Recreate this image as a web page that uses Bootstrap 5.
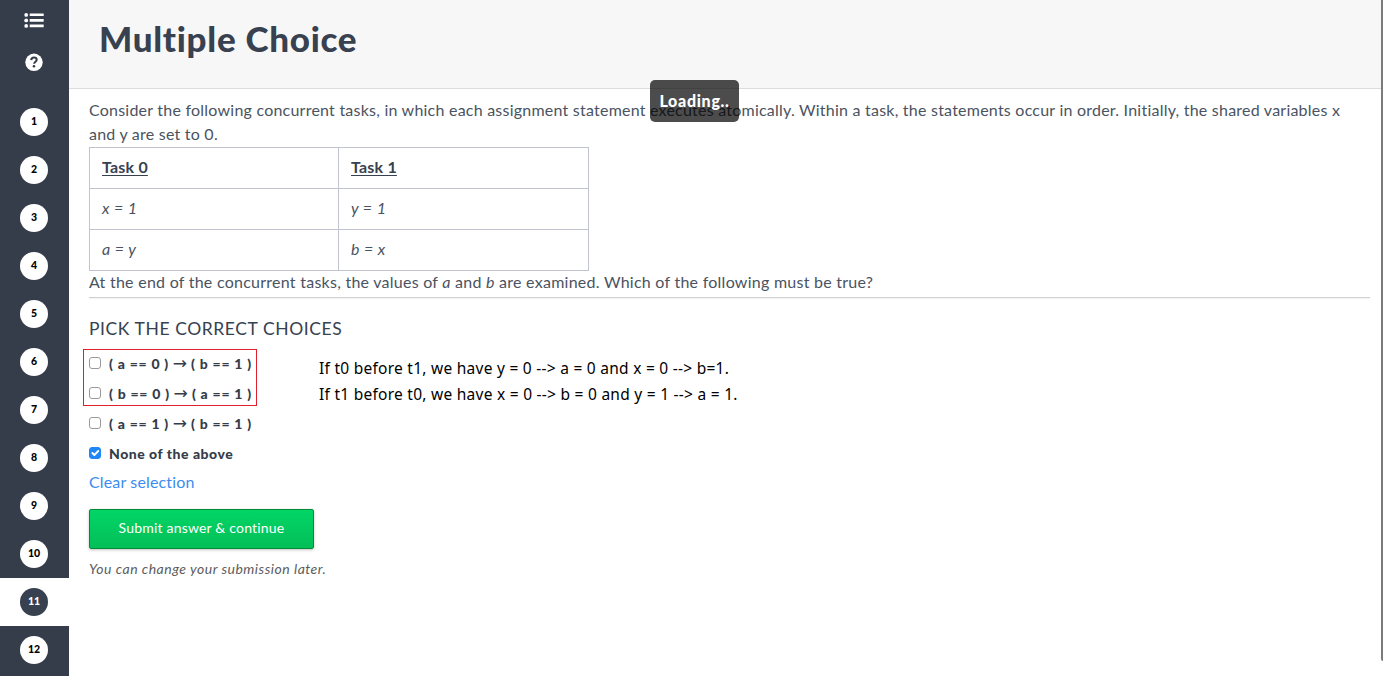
<!DOCTYPE html>
<html lang="en">
<head>
<meta charset="utf-8">
<meta name="viewport" content="width=device-width, initial-scale=1">
<title>Multiple Choice</title>
<link rel="stylesheet" href="https://cdn.jsdelivr.net/npm/bootstrap@5.3.0/dist/css/bootstrap.min.css">
<style>
  html, body { height: 676px; overflow: hidden; }
  body { font-family: Lato, "Liberation Sans", sans-serif; font-size: 16px; line-height: 24px; letter-spacing: .228px; font-variant-ligatures: none; color: #4a5361; background: #fff; }
  .side-rail { width: 69px; background: #343d49; }
  .rail-tools { height: 98px; padding: 12px 1px 0 0; gap: 25px; }
  .step-link { height: 48px; padding-right: 1px; flex: none; }
  .step-num { width: 28px; height: 28px; background: #fff; color: #000; font-size: 10.5px; font-weight: 900; line-height: 27px; letter-spacing: 0; }
  .step-current { background: #fff; }
  .step-current .step-num { background: #37414f; color: #fff; }
  .page-head { height: 89px; background: #f7f7f7; border-bottom: 1px solid #dcdcdc; padding: 16px 30px; }
  .page-head h1 { font-size: 35px; line-height: 44px; font-weight: 900; color: #37414f; letter-spacing: .72px; }
  .page-body { padding: 10px 13px 0 20px; }
  .copy { margin: -1px 0 1px; white-space: nowrap; }
  .copy-wide { letter-spacing: .255px; }
  .task-table { width: 500px; table-layout: fixed; color: inherit; border: 1px solid #c1c4d0; }
  .task-table > :not(caption) > * > * { padding: 7px 12px 9px; color: inherit; border: 1px solid #c1c4d0; height: 41px; }
  .task-table td:first-child { width: 249px; }
  .task-table u { font-weight: 700; letter-spacing: .2px; color: #37414f; text-underline-offset: 2px; text-decoration-thickness: 1px; }
  .task-table i { letter-spacing: .4px; }
  .rule { height: 1px; background: #cfd1d5; margin-top: 3px; box-shadow: 0 1px 1px #f2f2f2; }
  .pick-title { font-size: 17.5px; margin: 19px 0 8px; line-height: 24px; color: #37414f; letter-spacing: .58px; }
  .choice { height: 30px; gap: 8px; font-size: 14px; font-weight: 900; color: #343d49; letter-spacing: .53px; }
  .choice-expr { letter-spacing: .74px; }
  .arrow { font-family: "DejaVu Sans", sans-serif; font-weight: 400; font-size: 17px; line-height: 0; letter-spacing: 0; margin: 0 0 0 -.3px; }
  .choice .form-check-input { width: 12px; height: 12px; margin: -3px 0 0; border: 1px solid #9a9a9a; border-radius: 3px; flex: none; }
  .choice .form-check-input:checked { background-color: #1f87f5; border-color: #1f87f5; background-size: 13px; }
  .marked { left: -6px; top: 0; width: 174px; height: 57px; border: 1px solid #e0202c; pointer-events: none; }
  .notes { left: 230px; top: 6px; font-family: "Noto Sans", "Open Sans", sans-serif; font-size: 15.5px; line-height: 26px; letter-spacing: .26px; color: #000; white-space: nowrap; }
  .clear-link { margin-top: 1px; color: #3b8cf0; letter-spacing: .15px; }
  .submit { width: 225px; height: 40px; margin-top: 15px; border: 1px solid #068a3a; border-radius: 2px; background: linear-gradient(#02d566, #03bf57); color: #fff; font-size: 14px; line-height: 36px; padding: 0 0 2px; letter-spacing: .19px; box-shadow: 0 1px 3px rgba(0,0,0,.25); }
  .later { margin-top: 8px; font-size: 14px; letter-spacing: .5px; color: #5c5c5c; }
  .loading { left: 650px; top: 80px; width: 89px; height: 42px; background: rgba(0,0,0,.7); color: #fff; border-radius: 5px; font-weight: 900; line-height: 41px; letter-spacing: .7px; }
  .edge { right: 0; top: 0; width: 2px; height: 661px; background: #7b7b7b; border-bottom-left-radius: 2px; }
</style>
</head>
<body class="position-relative">
<div class="d-flex h-100">
  <nav class="side-rail d-flex flex-column flex-shrink-0 overflow-hidden">
    <div class="rail-tools d-flex flex-column align-items-center flex-shrink-0">
      <svg width="20" height="16" viewBox="0 0 20 16" fill="#fff" class="flex-shrink-0"><circle cx="2.2" cy="2.9" r="1.9"/><circle cx="2.2" cy="8.4" r="1.9"/><circle cx="2.2" cy="13.9" r="1.9"/><path d="M5.7 1.4h14v2.7h-14zM5.7 7h14v2.7h-14zM5.7 12.5h14v2.7h-14z"/></svg>
      <svg width="18" height="18" viewBox="0 0 18 18" class="flex-shrink-0"><circle cx="9" cy="9.3" r="8.7" fill="#fff"/><path d="M6.2 7.1C6.3 5.3 7.4 4.5 9 4.5c1.6 0 2.7.9 2.7 2.3 0 1.9-2.6 1.9-2.6 4" fill="none" stroke="#343d49" stroke-width="2"/><circle cx="9" cy="13.2" r="1.3" fill="#343d49"/></svg>
    </div>
    <div class="step-link d-flex align-items-center justify-content-center"><span class="step-num rounded-circle text-center">1</span></div>
    <div class="step-link d-flex align-items-center justify-content-center"><span class="step-num rounded-circle text-center">2</span></div>
    <div class="step-link d-flex align-items-center justify-content-center"><span class="step-num rounded-circle text-center">3</span></div>
    <div class="step-link d-flex align-items-center justify-content-center"><span class="step-num rounded-circle text-center">4</span></div>
    <div class="step-link d-flex align-items-center justify-content-center"><span class="step-num rounded-circle text-center">5</span></div>
    <div class="step-link d-flex align-items-center justify-content-center"><span class="step-num rounded-circle text-center">6</span></div>
    <div class="step-link d-flex align-items-center justify-content-center"><span class="step-num rounded-circle text-center">7</span></div>
    <div class="step-link d-flex align-items-center justify-content-center"><span class="step-num rounded-circle text-center">8</span></div>
    <div class="step-link d-flex align-items-center justify-content-center"><span class="step-num rounded-circle text-center">9</span></div>
    <div class="step-link d-flex align-items-center justify-content-center"><span class="step-num rounded-circle text-center">10</span></div>
    <div class="step-link step-current d-flex align-items-center justify-content-center"><span class="step-num rounded-circle text-center">11</span></div>
    <div class="step-link d-flex align-items-center justify-content-center"><span class="step-num rounded-circle text-center">12</span></div>
  </nav>
  <main class="flex-grow-1">
    <header class="page-head"><h1 class="m-0 text-nowrap">Multiple Choice</h1></header>
    <div class="page-body">
      <div class="copy">Consider the following concurrent tasks, in which each assignment statement executes atomically. Within a task, the statements occur in order. Initially, the shared variables x<br>and y are set to 0.</div>
      <table class="table task-table mb-0">
        <tbody>
          <tr><td><u>Task 0</u></td><td><u>Task 1</u></td></tr>
          <tr><td><i>x = 1</i></td><td><i>y = 1</i></td></tr>
          <tr><td><i>a = y</i></td><td><i>b = x</i></td></tr>
        </tbody>
      </table>
      <div class="copy copy-wide">At the end of the concurrent tasks, the values of <i>a</i> and <i>b</i> are examined. Which of the following must be true?</div>
      <div class="rule"></div>
      <h2 class="pick-title fw-normal">PICK THE CORRECT CHOICES</h2>
      <div class="position-relative">
        <label class="choice d-flex align-items-center"><input class="form-check-input" type="checkbox"><span class="choice-expr">( a == 0 ) <span class="arrow">→</span> ( b == 1 )</span></label>
        <label class="choice d-flex align-items-center"><input class="form-check-input" type="checkbox"><span class="choice-expr">( b == 0 ) <span class="arrow">→</span> ( a == 1 )</span></label>
        <label class="choice d-flex align-items-center"><input class="form-check-input" type="checkbox"><span class="choice-expr">( a == 1 ) <span class="arrow">→</span> ( b == 1 )</span></label>
        <label class="choice d-flex align-items-center"><input class="form-check-input" type="checkbox" checked><span>None of the above</span></label>
        <div class="marked position-absolute"></div>
        <div class="notes position-absolute">If t0 before t1, we have y = 0 --&gt; a = 0 and x = 0 --&gt; b=1.<br>If t1 before t0, we have x = 0 --&gt; b = 0 and y = 1 --&gt; a = 1.</div>
      </div>
      <a href="#" class="clear-link d-block text-decoration-none">Clear selection</a>
      <button type="button" class="btn submit d-block">Submit answer &amp; continue</button>
      <div class="later fst-italic">You can change your submission later.</div>
    </div>
  </main>
</div>
<div class="loading position-absolute text-center">Loading..</div>
<div class="edge position-absolute"></div>
<script src="https://cdn.jsdelivr.net/npm/bootstrap@5.3.0/dist/js/bootstrap.bundle.min.js"></script>
</body>
</html>
